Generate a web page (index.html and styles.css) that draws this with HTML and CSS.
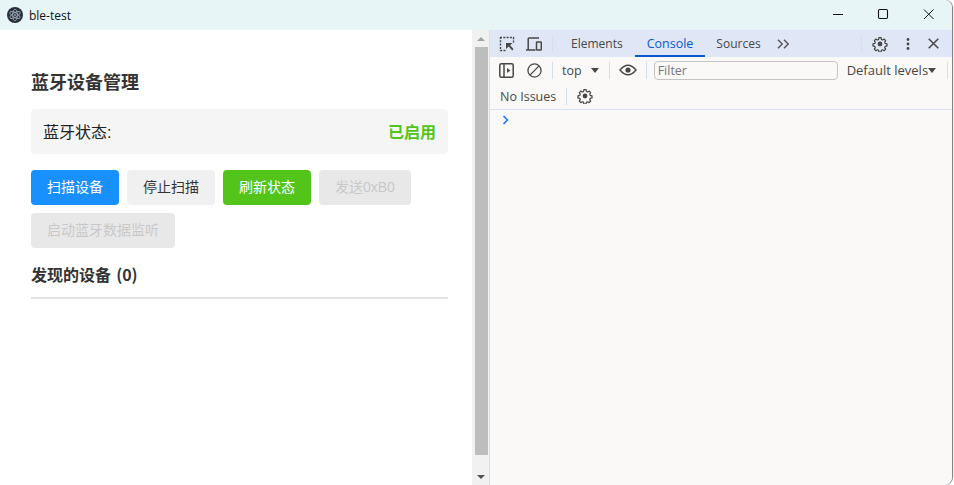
FILE: index.html
```html
<!DOCTYPE html>
<html lang="zh">
<head>
<meta charset="utf-8">
<title>ble-test</title>
<link rel="stylesheet" href="styles.css">
</head>
<body>
<div class="window">
  <header class="titlebar">
    <svg class="app-icon" width="16" height="16" viewBox="0 0 18 18"><circle cx="9" cy="9" r="9" fill="#2b2e3b"/><g fill="none" stroke="#9fb4bd" stroke-width=".9"><ellipse cx="9" cy="9" rx="6.500" ry="2.600" transform="rotate(30 9 9)"/><ellipse cx="9" cy="9" rx="6.500" ry="2.600" transform="rotate(90 9 9)"/><ellipse cx="9" cy="9" rx="6.500" ry="2.600" transform="rotate(150 9 9)"/></g><circle cx="9" cy="9" r="1" fill="#9fb4bd"/></svg>
    <span class="app-name">ble-test</span>
    <div class="win-controls">
      <svg width="46" height="30" viewBox="0 0 46 30"><path d="M19 14.500h10" stroke="#111" fill="none"/></svg>
      <svg width="46" height="30" viewBox="0 0 46 30"><rect x="18.500" y="9.500" width="9" height="9" rx="1.200" stroke="#111" stroke-width="1.100" fill="none"/></svg>
      <svg width="46" height="30" viewBox="0 0 46 30"><path d="M18 9.500l9.500 9.500M27.500 9.500L18 19" stroke="#111" fill="none"/></svg>
    </div>
  </header>
  <div class="content">
    <main class="page">
      <h1 class="title">蓝牙设备管理</h1>
      <div class="status"><span>蓝牙状态:</span><strong class="enabled">已启用</strong></div>
      <div class="buttons">
        <button class="btn primary">扫描设备</button>
        <button class="btn plain">停止扫描</button>
        <button class="btn success">刷新状态</button>
        <button class="btn disabled">发送0xB0</button>
        <button class="btn disabled">启动蓝牙数据监听</button>
      </div>
      <h2 class="subtitle">发现的设备 (0)</h2>
    </main>
    <div class="scrollbar">
      <div class="arrow up"></div>
      <div class="thumb"></div>
      <div class="arrow down"></div>
    </div>
    <aside class="devtools">
      <div class="dt-tabs">
        <svg class="dt-icon" width="16" height="16" viewBox="0 0 16 16"><path d="M1 1.500h13.500v5M1.500 1v13.500h5" fill="none" stroke="#474747" stroke-width="1.400" stroke-dasharray="2 1.300"/><path d="M7 7h6.500l-2.400 2.300 3.400 3.800-1.300 1.300-3.500-3.800-2.700 2.400z" fill="#474747"/></svg>
        <svg class="dt-icon gap" width="16" height="16" viewBox="0 0 16 16"><path d="M0 14h9.500M2.200 13.500V3q0-1 1-1h9.800" fill="none" stroke="#474747" stroke-width="1.500"/><rect x="10.500" y="6" width="4.800" height="8" rx=".6" fill="none" stroke="#474747" stroke-width="1.500"/></svg>
        <span class="vsep tabs-sep"></span>
        <span class="tab">Elements</span>
        <span class="tab active">Console</span>
        <span class="tab">Sources</span>
        <svg class="more" width="13" height="10" viewBox="0 0 13 10"><path d="M1 .8l4.200 4.200-4.200 4.200M7 .8l4.200 4.200-4.200 4.200" fill="none" stroke="#5a5a5a" stroke-width="1.500"/></svg>
        <span class="vsep right"></span>
        <svg class="gear" width="16" height="16" viewBox="0 0 16 16"><circle cx="8" cy="8" r="2.400" fill="#474747"/><path d="M6.800 1h2.400l.4 2 1.300.6 1.800-1 1.600 1.700-1 1.700.5 1.300 2 .5v2.400l-2 .5-.5 1.300 1 1.700-1.600 1.700-1.800-1-1.300.6-.4 2H6.800l-.4-2-1.300-.6-1.800 1-1.600-1.700 1-1.700-.5-1.300-2-.5V7.800l2-.5.5-1.300-1-1.700 1.600-1.700 1.800 1 1.300-.6z" transform="translate(.8 .8) scale(.9)" fill="none" stroke="#474747" stroke-width="1.400" stroke-linejoin="round"/></svg>
        <svg class="kebab" width="4" height="14" viewBox="0 0 4 14"><circle cx="2" cy="2.500" r="1.400" fill="#474747"/><circle cx="2" cy="7" r="1.400" fill="#474747"/><circle cx="2" cy="11.500" r="1.400" fill="#474747"/></svg>
        <svg class="close" width="11" height="11" viewBox="0 0 11 11"><path d="M.7.700l9.600 9.600M10.300.700L.7 10.300" fill="none" stroke="#474747" stroke-width="1.500"/></svg>
      </div>
      <div class="dt-bar">
        <svg class="dt-icon" width="15" height="15" viewBox="0 0 15 15"><rect x=".8" y=".8" width="13.400" height="13.400" rx="1.500" fill="none" stroke="#474747" stroke-width="1.500"/><path d="M5 1v13" stroke="#474747" stroke-width="1.500"/><path d="M8 5l3.500 2.500L8 10z" fill="#474747"/></svg>
        <svg class="dt-icon gap-wide" width="15" height="15" viewBox="0 0 16 16"><circle cx="8" cy="8" r="7" fill="none" stroke="#474747" stroke-width="1.400"/><path d="M3.100 12.900l9.800-9.800" stroke="#474747" stroke-width="1.400"/></svg>
        <span class="vsep"></span>
        <span class="ctx">top</span>
        <span class="tri"></span>
        <span class="vsep after-tri"></span>
        <svg class="eye" width="18" height="12" viewBox="0 0 18 12"><path d="M1 6q8-9.500 16 0q-8 9.500-16 0z" fill="none" stroke="#474747" stroke-width="1.400"/><circle cx="9" cy="6" r="2.600" fill="#474747"/></svg>
        <span class="vsep"></span>
        <div class="filter">Filter</div>
        <span class="levels">Default levels</span>
        <span class="tri small"></span>
        <span class="vsep"></span>
      </div>
      <div class="dt-issues">
        <span class="issues">No Issues</span>
        <span class="vsep issues-sep"></span>
        <svg class="gear" width="16" height="16" viewBox="0 0 16 16"><circle cx="8" cy="8" r="2.400" fill="#474747"/><path d="M6.800 1h2.400l.4 2 1.300.6 1.800-1 1.600 1.700-1 1.700.5 1.300 2 .5v2.400l-2 .5-.5 1.300 1 1.700-1.600 1.700-1.800-1-1.300.6-.4 2H6.800l-.4-2-1.300-.6-1.800 1-1.600-1.700 1-1.700-.5-1.300-2-.5V7.800l2-.5.5-1.300-1-1.700 1.600-1.700 1.800 1 1.300-.6z" transform="translate(.8 .8) scale(.9)" fill="none" stroke="#474747" stroke-width="1.400" stroke-linejoin="round"/></svg>
      </div>
      <div class="console">
        <svg width="7" height="10" viewBox="0 0 7 10"><path d="M1.500 1l4 4-4 4" fill="none" stroke="#1a73e8" stroke-width="1.500"/></svg>
      </div>
    </aside>
  </div>
</div>
</body>
</html>
```
FILE: styles.css
```css
* { box-sizing: border-box; }
html, body { margin: 0; height: 100%; overflow: hidden; background: #fff; }
body { font-family: "Liberation Sans", "Noto Sans CJK SC", sans-serif; }
.window { width: 952px; height: 485px; display: flex; flex-direction: column; overflow: hidden; border-radius: 0 8px 8px 0; box-shadow: 1px 0 1px rgba(0, 0, 0, .55); }
.titlebar { height: 30px; flex: none; display: flex; align-items: center; padding-left: 7px; background: #e8f5f6; }
.app-icon { margin-right: 6px; }
.app-name { font: 12px "Open Sans", "Noto Sans", sans-serif; color: #111; }
.win-controls { margin-left: auto; display: flex; }
.win-controls svg { display: block; }
.content { flex: 1; display: flex; min-height: 0; }
.page { width: 472px; flex: none; padding: 0 24px 0 31px; background: #fff; color: #333; }
.title { margin: 41px 0 14px; font-size: 18px; line-height: 24px; font-weight: 700; color: #333; }
.status { height: 45px; display: flex; align-items: center; justify-content: space-between; padding: 0 12px 2px; background: #f5f5f5; border-radius: 4px; font-size: 16px; color: #222; }
.enabled { color: #52c41a; font-weight: 700; }
.buttons { display: flex; flex-wrap: wrap; gap: 8px; margin-top: 16px; }
.btn { height: 35px; padding: 0 16px 3px; border: 0; border-radius: 4px; font: 14px "Liberation Sans", "Noto Sans CJK SC", sans-serif; }
.primary { background: #1890ff; color: #fff; }
.plain { background: #f0f0f0; color: #333; }
.success { background: #52c41a; color: #fff; }
.disabled { background: #e8e8e8; color: #c8c8c8; }
.subtitle { margin: 15px 0 0; padding-bottom: 12px; border-bottom: 2px solid #e3e3e3; font: 700 16px/22px "Noto Sans CJK SC", sans-serif; word-spacing: 1.500px; color: #333; }
.scrollbar { width: 17px; flex: none; display: flex; flex-direction: column; align-items: center; background: #f1f1f1; padding-left: 1px; }
.arrow { width: 0; height: 0; flex: none; border-left: 4px solid transparent; border-right: 4px solid transparent; }
.arrow.up { margin: 7px 0 6px; border-bottom: 4px solid #a3a3a3; }
.arrow.down { margin: auto 0 6px; border-top: 4px solid #505050; }
.thumb { width: 13px; height: 408px; flex: none; background: #bdbdbd; }
.devtools { flex: 1; min-width: 0; display: flex; flex-direction: column; border-left: 1px solid #d6e0f0; background: #faf9f8; font: 12.500px "Open Sans", "Noto Sans", sans-serif; color: #474747; }
.dt-tabs { height: 27px; flex: none; display: flex; align-items: center; background: #dfe6f5; padding-left: 9px; }
.dt-bar { height: 26px; flex: none; display: flex; align-items: center; padding-left: 9px; white-space: nowrap; }
.dt-issues { height: 27px; flex: none; display: flex; align-items: center; padding-left: 10px; border-bottom: 1px solid #d6e2f3; }
.console { flex: 1; padding: 5px 0 0 12px; }
.console svg { display: block; }
.dt-icon { flex: none; }
.gap { margin-left: 11px; }
.gap-wide { margin-left: 13px; }
.vsep { width: 1px; height: 17px; flex: none; background: #d3deef; margin: 0 9px; }
.dt-icon + .vsep { margin-left: 10px; }
.tabs-sep { margin-right: 6px; }
.tab { height: 27px; line-height: 27px; padding: 0 12px; font-size: 12px; color: #474747; }
.tab.active { font-size: 12.500px; color: #0b57d0; border-bottom: 2px solid #0b57d0; }
.tab.active + .tab { padding-left: 11px; }
.more { margin-left: 4px; }
.vsep.right { margin-left: auto; margin-right: 10px; }
.kebab { margin-left: 18px; }
.close { margin: 0 13px 0 18px; }
.tri { width: 0; height: 0; flex: none; margin-left: 9px; border-left: 4px solid transparent; border-right: 4px solid transparent; border-top: 5px solid #474747; }
.tri.small { margin-left: 0; margin-right: 2px; }
.after-tri { margin-left: 10px; }
.eye { flex: none; }
.filter { width: 184px; height: 19px; flex: none; margin-left: -2px; padding-left: 3px; line-height: 17px; border: 1px solid #c4c4c4; border-radius: 4px; color: #777; }
.levels { margin-left: 9px; font-size: 13px; }
.issues { white-space: nowrap; }
.issues-sep { margin: 0 10px; }
```
